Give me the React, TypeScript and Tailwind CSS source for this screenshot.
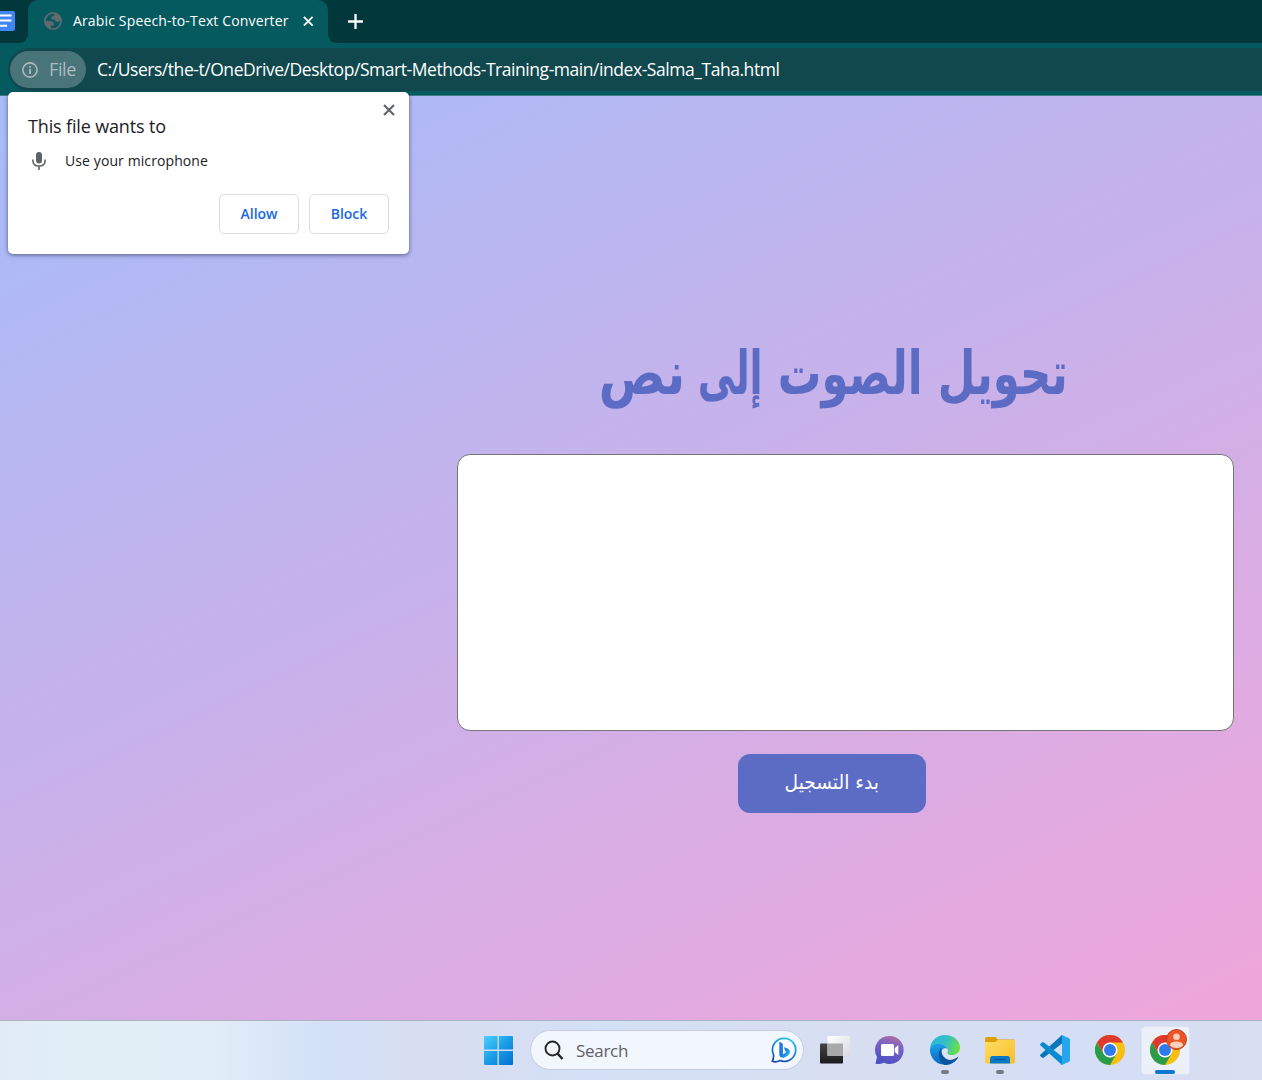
import React from 'react';

const ui = "font-['Open_Sans','Noto_Sans',sans-serif]";
const arabic = "font-['DejaVu_Sans',sans-serif]";

function Globe() {
  return (
    <svg width="18" height="18" viewBox="2 2 20 20">
      <path
        fill="#626a70"
        fillRule="evenodd"
        d="M12 2A10 10 0 1 0 12 22A10 10 0 1 0 12 2ZM4 12h4.400c3.407.022 4.922 1.730 4.543 5.127H9.488v2.470a8.004 8.004 0 0 0 10.498-8.083C19.327 12.504 18.332 13 17 13c-2.137 0-3.206-.916-3.206-2.750h-3.748c-.274-2.728.683-4.092 2.870-4.092 0-.975.327-1.597.811-1.970A8.004 8.004 0 0 0 4 12Z"
      />
    </svg>
  );
}

function Close({ size, color, width }: { size: number; color: string; width: number }) {
  return (
    <svg width={size} height={size} viewBox="0 0 12 12" stroke={color} strokeWidth={width}>
      <path d="M1 1 11 11M11 1 1 11" />
    </svg>
  );
}

function TabStrip() {
  return (
    <div className="flex h-[43px] bg-[#02373c]">
      <div className="flex w-7 items-start pt-[11px]">
        <svg width="15" height="20" viewBox="0 0 15 20">
          <path d="M0 0H13Q15 0 15 2V18Q15 20 13 20H0Z" fill="#4285f4" />
          <path d="M0 4.500H11.500M0 9.500H11.500M0 14.800H7" stroke="#fff" strokeWidth="2" />
        </svg>
      </div>
      <div className="relative flex h-[43px] w-[300px] items-center rounded-t-[10px] bg-[#055a60] pb-px pl-4 pr-[14px]">
        <svg className="absolute -left-[10px] bottom-0" width="10" height="10"><path d="M0 10Q10 10 10 0V10Z" fill="#055a60" /></svg>
        <svg className="absolute -right-[10px] bottom-0" width="10" height="10"><path d="M10 10Q0 10 0 0V10Z" fill="#055a60" /></svg>
        <Globe />
        <span className="ml-[11px] w-[216px] whitespace-nowrap pb-px text-[14px] leading-5 tracking-[0.15px] text-white">Arabic Speech-to-Text Converter</span>
        <span className="ml-[14px]"><Close size={10.5} color="#fff" width={2.1} /></span>
      </div>
      <svg className="ml-5 mt-[14px]" width="15" height="15" viewBox="0 0 15 15" stroke="#fff" strokeWidth="2.300"><path d="M7.500 0V15M0 7.500H15" /></svg>
    </div>
  );
}

function AddressBar() {
  return (
    <div className="h-[53px] border-b border-[#3b7f88] bg-[#055a60] pl-2 pt-[5px]">
      <div className="flex h-[43px] items-center rounded-l-full bg-[#10484e] pl-[2px]">
        <div className="flex h-[37px] w-[76px] items-center rounded-full bg-[#48747a] pl-3 text-[#adbabd]">
          <svg width="16" height="16" viewBox="0 0 16 16" fill="none" stroke="currentColor">
            <circle cx="8" cy="8" r="7.100" strokeWidth="1.600" />
            <path d="M8 7V12M8 4V5.700" strokeWidth="1.800" />
          </svg>
          <span className="ml-[11px] pb-px text-[18px] leading-6 tracking-[-0.4px]">File</span>
        </div>
        <span className="ml-[11px] whitespace-nowrap pb-[2px] text-[17.500px] leading-6 tracking-[-0.45px] text-white">
          C:/Users/the-t/OneDrive/Desktop/Smart-Methods-Training-main/index-Salma_Taha.html
        </span>
      </div>
    </div>
  );
}

function PermissionPopup() {
  return (
    <div className="absolute left-2 top-[91.500px] h-[162px] w-[401px] rounded-[5px] bg-white shadow-[0_1px_4px_rgba(40,40,80,0.65)]">
      <div className="absolute right-[14px] top-[12.500px]"><Close size={12} color="#5f6368" width={2.1} /></div>
      <div className="px-5 pt-[22.500px]">
        <h2 className="text-[18px] leading-6 tracking-[-0.15px] text-[#202124]">This file wants to</h2>
        <div className="mt-3 flex h-5 items-center">
          <svg className="ml-1 mt-px" width="14" height="20" viewBox="0 0 14 20" fill="none" stroke="#5f6368">
            <rect x="4" y="1" width="6" height="11.500" rx="3" fill="#5f6368" stroke="none" />
            <path d="M.9 8.500V9.500C.9 13 3.500 15 7 15S13.100 13 13.100 9.500V8.500M7 15V19" strokeWidth="1.600" />
          </svg>
          <span className="ml-[19px] pt-[2px] text-[14px] leading-5 tracking-[0.1px] text-[#202124]">Use your microphone</span>
        </div>
        <div className="mt-6 flex justify-end gap-[10px] text-[14px] font-semibold text-[#2068e3]">
          <button className="h-10 w-20 rounded-[5px] border border-[#dadce0] pb-[2px]">Allow</button>
          <button className="h-10 w-20 rounded-[5px] border border-[#dadce0] pb-[2px]">Block</button>
        </div>
      </div>
    </div>
  );
}

function WindowsLogo() {
  return (
    <svg width="30" height="30" viewBox="0 0 30 30">
      <defs><linearGradient id="win" x1="0" y1="0" x2="1" y2="1"><stop stopColor="#4cd0ff" /><stop offset=".5" stopColor="#1b9ce8" /><stop offset="1" stopColor="#006fce" /></linearGradient></defs>
      <path d="M2 1H14.500V14.500H1V2Q1 1 2 1M15.800 1H29Q30 1 30 2V14.500H15.800ZM1 16H14.500V30H2Q1 30 1 29ZM15.800 16H30V29Q30 30 29 30H15.800Z" fill="url(#win)" />
    </svg>
  );
}

function Bing() {
  return (
    <svg width="26" height="26" viewBox="0 0 26 26">
      <defs><linearGradient id="bing" x1=".7" y1="0" x2=".3" y2="1"><stop stopColor="#24c5ef" /><stop offset=".5" stopColor="#1a80dc" /><stop offset="1" stopColor="#1948ae" /></linearGradient>
      <linearGradient id="bb" x1="0" y1="0" x2="1" y2="1"><stop stopColor="#2f6fe8" /><stop offset=".5" stopColor="#1d7be0" /><stop offset="1" stopColor="#35c9f2" /></linearGradient></defs>
      <path d="M13.500 1.300A11.500 11.500 0 1 1 9 23.500Q5 25.700 1.300 24.300Q3 21 2.500 17.500A11.500 11.500 0 0 1 13.500 1.300Z" fill="#fafdff" stroke="url(#bing)" strokeWidth="1.700" />
      <path d="M8.300 5Q11.700 5.300 11.900 8V17.300L14.800 15.500Q15 14.500 13.800 13L13 10.300Q18.800 11.300 19 15Q19 17.500 16.800 18.700L13 20.700Q8.300 21.500 8.300 17Z" fill="url(#bb)" />
    </svg>
  );
}

function TaskView() {
  return (
    <svg width="30" height="30" viewBox="0 0 30 30">
      <defs><linearGradient id="tv" x1="0" y1="0" x2="0" y2="1"><stop stopColor="#444" /><stop offset="1" stopColor="#1b1b1b" /></linearGradient>
      <linearGradient id="tw" x1="0" y1="0" x2="1" y2="1"><stop stopColor="#fff" /><stop offset="1" stopColor="#d8dadf" /></linearGradient></defs>
      <rect x="0" y="8.500" width="23" height="20" rx="1" fill="url(#tv)" />
      <rect x="7.500" y="1" width="22.500" height="20" rx="1" fill="url(#tw)" />
      <rect x="7.500" y="8.500" width="15.500" height="12.500" fill="#a9a9aa" />
    </svg>
  );
}

function Chat() {
  return (
    <svg width="30" height="30" viewBox="0 0 30 30">
      <defs><linearGradient id="chat" x1=".7" y1="0" x2=".4" y2="1"><stop stopColor="#b56c9d" /><stop offset=".35" stopColor="#7a64c5" /><stop offset="1" stopColor="#4b50c4" /></linearGradient></defs>
      <path d="M14.500 1A14 14 0 1 1 9 27.800Q5 29.500 .5 28.800L2 22A14 14 0 0 1 14.500 1Z" fill="url(#chat)" />
      <rect x="6" y="9" width="13" height="12" rx="1.500" fill="#fff" /><path d="M19.700 13.200 23.300 10V20L19.700 17Z" fill="#fff" />
    </svg>
  );
}

function Edge() {
  return (
    <svg width="30" height="30" viewBox="0 0 30 30">
      <defs>
        <linearGradient id="eg" x1="0" y1=".3" x2="1" y2=".6"><stop stopColor="#2ab5df" /><stop offset=".5" stopColor="#35c1c0" /><stop offset="1" stopColor="#6be23f" /></linearGradient>
        <linearGradient id="eb" x1="0" y1="0" x2="0" y2="1"><stop stopColor="#1ca0e5" /><stop offset="1" stopColor="#0868c4" /></linearGradient>
      </defs>
      <path d="M0 14A15 14.500 0 0 1 15 0C24 0 30 6 30 12.500C30 18 26 20 22 20C18 20 16.500 18.500 17.500 16.500C19 13 16 10.500 12 9.500C6 8 2 10.500 0 14Z" fill="url(#eg)" />
      <path d="M0 14C2 9 8 7.500 13 9.500C16.500 11 18 13 17.800 15.500C17 13.500 14 12.500 12 15C8 20 12 27.500 18 29.500A15 15 0 0 1 0 14Z" fill="url(#eb)" />
      <path d="M11.800 12.500C10.500 18 13.500 25 20 25C23 25 25.500 23.500 28.300 21.800C26 27 21 30 15.500 30C10 28.500 5.500 19 11.800 12.500Z" fill="#0c559f" />
      <path d="M12.200 15.500C13.500 12.500 18.300 12.600 17.800 15.700C16.800 17.800 17 19 18.500 20C20.500 21.300 25 20.800 28.300 21.800C26 24 22.500 25 19.800 25C15 24.700 11 20 12.200 15.500Z" fill="#dce3f3" />
      <path d="M12.500 18C13.300 22 16.300 25 20 25C23 25 25.500 23.500 28.300 21.800L27.500 23.500C23 27.500 13.500 27 12.500 18Z" fill="#0c559f" />
    </svg>
  );
}

function Folder() {
  return (
    <svg width="30" height="30" viewBox="0 0 30 30">
      <defs><linearGradient id="folder" x1="0" y1="0" x2="1" y2="1"><stop stopColor="#ffdf66" /><stop offset="1" stopColor="#f9bc27" /></linearGradient></defs>
      <path d="M0 4Q0 2 2 2H10Q11 2 13 4.500H29Q30 4.500 30 6V15H0Z" fill="#dda004" />
      <path d="M0 7H10L13 5H30V27Q30 28.500 28.500 28.500H1.500Q0 28.500 0 27Z" fill="url(#folder)" />
      <path d="M5 28.500V23.500Q5 21 7.500 21H22.500Q25 21 25 23.500V28.500Z" fill="#087ac8" /><path d="M9 24.500H21" stroke="#07569b" strokeWidth="1.200" />
    </svg>
  );
}

function VSCode() {
  return (
    <svg width="30" height="30" viewBox="0 0 30 30">
      <path d="M.5 19.500Q-.3 20.500 .5 21.200L2 22.600Q3 23.300 4 22.500L22 8.500V0Z" fill="#0876b9" />
      <path d="M.5 10.500Q-.3 9.500 .5 8.800L2 7.400Q3 6.700 4 7.500L22 21.500V30Z" fill="#098bd2" />
      <path d="M22 0 29 3.200Q30 3.700 30 5V25Q30 26.300 29 26.800L22 30Q20.800 30 20.500 29.500Q22 29.500 22 28V2Q22 .5 20.500 .5Z" fill="#28a5ef" />
    </svg>
  );
}

function Chrome() {
  return (
    <svg width="30" height="30" viewBox="0 0 30 30">
      <circle cx="15" cy="15" r="15" fill="#f8bf10" />
      <path d="M2 7.500 8.500 18.750 15 15V7.500H28A15 15 0 0 0 2 7.500Z" fill="#de3a2d" />
      <path d="M2 7.500 8.500 18.750 15 15 21.500 18.750 15 30A15 15 0 0 1 2 7.500Z" fill="#2b9c4c" />
      <circle cx="15" cy="15" r="7.500" fill="#fff" /><circle cx="15" cy="15" r="6" fill="#2e7bed" />
    </svg>
  );
}

function AppIcon({ children, mark }: { children: React.ReactNode; mark?: boolean }) {
  return (
    <div className="flex h-[49px] w-[30px] flex-col items-center pt-[9px]">
      {children}
      {mark && <span className="mt-[5px] h-1 w-2 shrink-0 rounded-full bg-[#777c83]" />}
    </div>
  );
}

function Taskbar() {
  return (
    <div className="flex h-[60px] items-start border-t border-[#a9b3c3] bg-[linear-gradient(90deg,#e1ebf5_0,#e1eff7_100px,#e1edf6_210px,#d2e1f9_325px,#d7def1_400px,#d6def3_500px,#d4e0f5_590px,#d7def1_850px,#d4def5_1105px,#d9def0_1262px)] pl-[483px] pt-[5px]">
      <div className="pt-[9px]"><WindowsLogo /></div>
      <div className="ml-[17px] mt-[4px] flex h-[40px] w-[274px] items-center rounded-full border border-[#c4cee0] bg-[#f2f6fd] pl-[13px] pr-[6px]">
        <svg width="20" height="20" viewBox="0 0 20 20" fill="none" stroke="#252629"><circle cx="8.500" cy="8.500" r="7" strokeWidth="1.900" /><path d="M13.500 13.500 18.500 19" strokeWidth="2.500" /></svg>
        <span className="ml-3 pt-px text-[17px] leading-6 tracking-[-0.3px] text-[#606267]">Search</span>
        <span className="ml-auto"><Bing /></span>
      </div>
      <div className="ml-4 flex gap-[25px]">
        <AppIcon><TaskView /></AppIcon>
        <AppIcon><Chat /></AppIcon>
        <AppIcon mark><Edge /></AppIcon>
        <AppIcon mark><Folder /></AppIcon>
        <AppIcon><VSCode /></AppIcon>
        <AppIcon><Chrome /></AppIcon>
      </div>
      <div className="relative ml-4 flex h-[49px] w-[49px] flex-col items-center rounded-[4px] border border-[#dfe4ef] bg-[#ebf0fa] pr-px pt-2">
        <Chrome />
        <svg className="absolute left-6 top-[2px]" width="21" height="21" viewBox="0 0 21 21">
          <circle cx="10.500" cy="10.500" r="10" fill="#ed5424" stroke="#b8411f" /><circle cx="10.500" cy="7.700" r="3.300" fill="#ffcfbf" /><path d="M3.800 16.500Q4.500 12.500 10.500 12.500T17.200 16.500Q14.500 19 10.500 19T3.800 16.500Z" fill="#ffcfbf" />
        </svg>
        <span className="mt-[5px] h-1 w-5 shrink-0 rounded-full bg-[#0878d4]" />
      </div>
    </div>
  );
}

export default function App() {
  return (
    <div className={`relative flex h-[1080px] w-[1262px] flex-col overflow-hidden ${ui}`}>
      <TabStrip />
      <AddressBar />
      <main dir="rtl" className="h-[924px] w-[1664px] self-start bg-[linear-gradient(155deg,#a6bcf8,#f8a3d6)]">
        <div className={`flex flex-col items-center ${arabic}`}>
          <h1 className="mt-[235px] h-[123px] scale-x-[0.724] whitespace-nowrap text-[60px] font-bold leading-[84px] text-[#5c6bc4]">
            تحويل الصوت <span className="inline-block origin-right scale-x-[0.86]">إلى</span>{' '}
            <span className="inline-block origin-right translate-x-[18px] scale-x-[1.15]">نص</span>
          </h1>
          <div className="relative left-[13.500px] h-[277px] w-[777px] rounded-[13px] border border-[#767676] bg-white" />
          <button className="mt-[23px] h-[59px] w-[188px] rounded-xl bg-[#5c6bc4] pb-1 text-[20px] text-white">
            <span className="inline-block scale-x-[0.93]">بدء التسجيل</span>
          </button>
        </div>
      </main>
      <Taskbar />
      <PermissionPopup />
    </div>
  );
}
